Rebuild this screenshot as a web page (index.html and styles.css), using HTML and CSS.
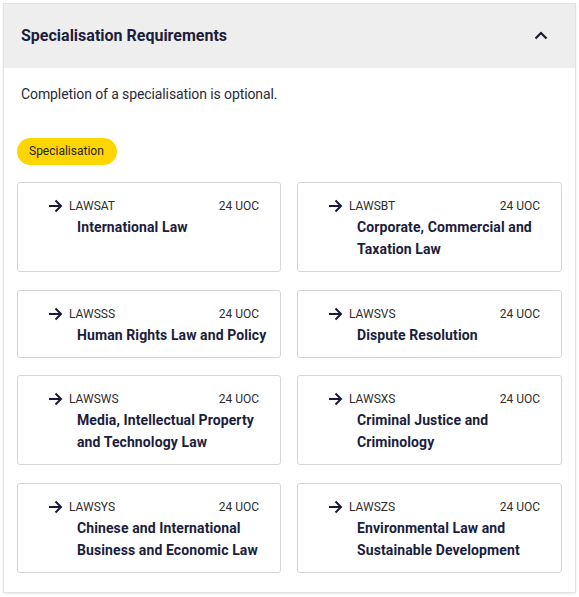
FILE: index.html
```html
<!DOCTYPE html>
<html lang="en">
<head>
<meta charset="utf-8">
<title>Specialisation Requirements</title>
<link rel="stylesheet" href="styles.css">
</head>
<body>
<section class="panel">
  <header class="panel-head">
    <h2 class="panel-title">Specialisation Requirements</h2>
    <svg class="chevron" width="14" height="9" viewBox="0 0 14 9" aria-hidden="true"><path d="M1.5 7.5 L7 2 L12.5 7.5" fill="none" stroke="#1a1a2e" stroke-width="2.2"/></svg>
  </header>
  <div class="panel-body">
    <p class="intro">Completion of a specialisation is optional.</p>
    <span class="badge">Specialisation</span>
    <div class="grid">
      <a class="card"><div class="card-top"><svg class="arrow" width="15" height="14" viewBox="0 0 15 14"><path d="M1 7 H13 M7.5 1.5 L13 7 L7.5 12.5" fill="none" stroke="#1a1a3a" stroke-width="2"/></svg><span class="code">LAWSAT</span><span class="uoc">24 UOC</span></div><div class="title">International Law</div></a>
      <a class="card"><div class="card-top"><svg class="arrow" width="15" height="14" viewBox="0 0 15 14"><path d="M1 7 H13 M7.5 1.5 L13 7 L7.5 12.5" fill="none" stroke="#1a1a3a" stroke-width="2"/></svg><span class="code">LAWSBT</span><span class="uoc">24 UOC</span></div><div class="title">Corporate, Commercial and Taxation Law</div></a>
      <a class="card"><div class="card-top"><svg class="arrow" width="15" height="14" viewBox="0 0 15 14"><path d="M1 7 H13 M7.5 1.5 L13 7 L7.5 12.5" fill="none" stroke="#1a1a3a" stroke-width="2"/></svg><span class="code">LAWSSS</span><span class="uoc">24 UOC</span></div><div class="title">Human Rights Law and Policy</div></a>
      <a class="card"><div class="card-top"><svg class="arrow" width="15" height="14" viewBox="0 0 15 14"><path d="M1 7 H13 M7.5 1.5 L13 7 L7.5 12.5" fill="none" stroke="#1a1a3a" stroke-width="2"/></svg><span class="code">LAWSVS</span><span class="uoc">24 UOC</span></div><div class="title">Dispute Resolution</div></a>
      <a class="card"><div class="card-top"><svg class="arrow" width="15" height="14" viewBox="0 0 15 14"><path d="M1 7 H13 M7.5 1.5 L13 7 L7.5 12.5" fill="none" stroke="#1a1a3a" stroke-width="2"/></svg><span class="code">LAWSWS</span><span class="uoc">24 UOC</span></div><div class="title">Media, Intellectual Property and Technology Law</div></a>
      <a class="card"><div class="card-top"><svg class="arrow" width="15" height="14" viewBox="0 0 15 14"><path d="M1 7 H13 M7.5 1.5 L13 7 L7.5 12.5" fill="none" stroke="#1a1a3a" stroke-width="2"/></svg><span class="code">LAWSXS</span><span class="uoc">24 UOC</span></div><div class="title">Criminal Justice and Criminology</div></a>
      <a class="card"><div class="card-top"><svg class="arrow" width="15" height="14" viewBox="0 0 15 14"><path d="M1 7 H13 M7.5 1.5 L13 7 L7.5 12.5" fill="none" stroke="#1a1a3a" stroke-width="2"/></svg><span class="code">LAWSYS</span><span class="uoc">24 UOC</span></div><div class="title">Chinese and International Business and Economic Law</div></a>
      <a class="card"><div class="card-top"><svg class="arrow" width="15" height="14" viewBox="0 0 15 14"><path d="M1 7 H13 M7.5 1.5 L13 7 L7.5 12.5" fill="none" stroke="#1a1a3a" stroke-width="2"/></svg><span class="code">LAWSZS</span><span class="uoc">24 UOC</span></div><div class="title">Environmental Law and Sustainable Development</div></a>
    </div>
  </div>
</section>
</body>
</html>
```

FILE: styles.css
```css
* { box-sizing: border-box; }
html, body { margin: 0; padding: 0; background: #ffffff; }
body {
  font-family: Roboto, "Liberation Sans", Arial, sans-serif;
  color: #2b2b2b;
  padding: 4px 4px 5px 4px;
}
.panel {
  background: #ffffff;
  box-shadow: 0 0 0 1px #e2e2e2, 0 1px 3px rgba(0,0,0,0.18);
  width: 571px;
}
.panel-head {
  background: #eeeeee;
  height: 64px;
  display: flex;
  align-items: center;
  justify-content: space-between;
  padding: 0 27px 2px 17px;
}
.panel-title {
  margin: 0;
  font-size: 16px;
  font-weight: 700;
  color: #1b1d3c;
}
.chevron { display: block; margin-top: 0; }
.panel-body {
  padding: 16px 13px 19px 13px;
}
.intro {
  margin: 0 0 0 4px;
  font-size: 14px;
  line-height: 20px;
  letter-spacing: -0.1px;
  color: #2a2a3a;
}
.badge {
  display: block;
  width: max-content;
  margin-top: 34px;
  background: #fdd602;
  color: #1e1e1e;
  font-size: 12px;
  line-height: 27px;
  height: 27px;
  padding: 0 13px 0 12px;
  border-radius: 14px;
}
.grid {
  margin-top: 17px;
  display: grid;
  grid-template-columns: 264px 265px;
  column-gap: 16px;
  row-gap: 17.5px;
}
.card {
  display: block;
  border: 1px solid #d6d6d6;
  border-radius: 3px;
  padding: 13px 6px 11px 30px;
  min-height: 68px;
  color: inherit;
  text-decoration: none;
}
.card-top {
  display: flex;
  align-items: center;
  height: 20px;
  padding-right: 15px;
}
.arrow { display: block; margin-right: 6px; flex: none; }
.code {
  font-size: 12px;
  color: #2e2e2e;
}
.uoc {
  margin-left: auto;
  font-size: 12px;
  color: #2e2e2e;
}
.title {
  margin-left: 29px;
  font-size: 14px;
  font-weight: 700;
  line-height: 22px;
  letter-spacing: 0.1px;
  color: #1b1d3c;
}
```
